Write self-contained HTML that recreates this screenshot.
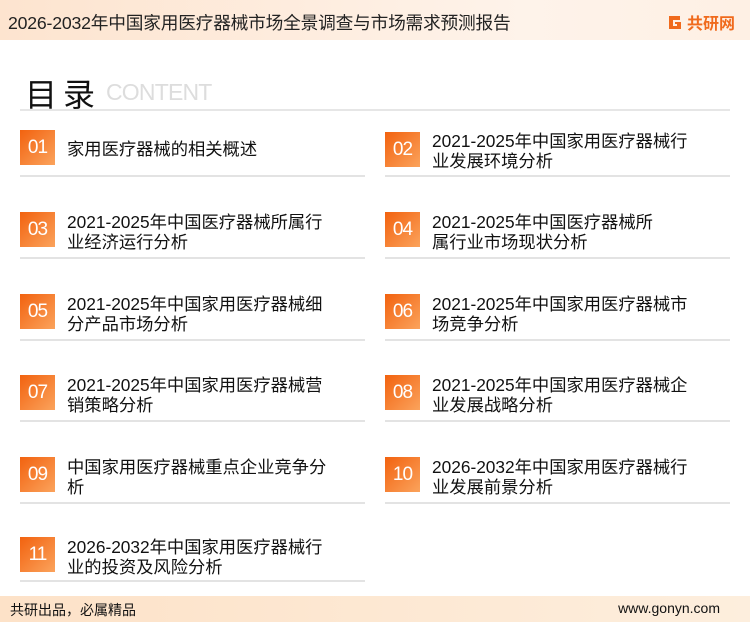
<!DOCTYPE html>
<html><head><meta charset="utf-8"><style>
*{margin:0;padding:0;box-sizing:border-box}
body{width:750px;height:622px;overflow:hidden;background:#fff;font-family:"Liberation Sans","Noto Sans CJK SC",sans-serif;color:#111;position:relative}
.hdr{position:absolute;left:0;top:0;width:750px;height:40px;background:linear-gradient(90deg,#fde4cf,#fef3ea 70%,#fef0e4)}
.hdr .t{position:absolute;left:8px;top:9px;font-size:17.7px;color:#222;letter-spacing:-0.2px}
.logo{position:absolute;left:666px;top:10px;display:flex;align-items:center}
.logo span{color:#f06a1c;font-weight:bold;font-size:16px;margin-left:4px}
.ttl{position:absolute;left:25px;top:70px;font-size:32px;letter-spacing:6px;color:#111}
.cnt{position:absolute;left:106px;top:79px;font-size:23px;color:#ddd;letter-spacing:-0.8px}
.hl{position:absolute;left:20px;top:109px;width:710px;height:2px;background:#e6e6e6}
.it{position:absolute;width:345px}
.box{position:absolute;left:0;width:35px;height:35px;background:linear-gradient(135deg,#f2620f,#fba35c);color:#fff;font-size:19px;text-align:center;line-height:35px;letter-spacing:-1px}
.tx{position:absolute;left:47px;font-size:17.3px;line-height:20px;color:#111;width:320px;white-space:nowrap}
.ln{position:absolute;left:0;width:345px;height:2px;background:#e3e3e3}
.ftr{position:absolute;left:0;top:596px;width:750px;height:26px;background:linear-gradient(90deg,#fde2c8,#fdeedd)}
.ftr .a{position:absolute;left:10px;top:4px;font-size:14px}
.ftr .b{position:absolute;right:30px;top:4px;font-size:14px}
</style></head><body>
<div class="hdr"><div class="t">2026-2032年中国家用医疗器械市场全景调查与市场需求预测报告</div>
<div class="logo"><svg width="17" height="17" viewBox="0 0 17 17"><path d="M3 2h11v4H7v6h4V10h-2V8h6v7H3z" fill="#f06a1c"/></svg><span>共研网</span></div></div>
<div class="ttl">目录</div><div class="cnt">CONTENT</div><div class="hl"></div>

<div class="it" style="left:20px;top:130px"><div class="box" style="top:0">01</div><div class="tx" style="top:9px">家用医疗器械的相关概述</div><div class="ln" style="top:45px"></div></div>
<div class="it" style="left:385px;top:130px"><div class="box" style="top:2px">02</div><div class="tx" style="top:1px">2021-2025年中国家用医疗器械行<br>业发展环境分析</div><div class="ln" style="top:45px"></div></div>

<div class="it" style="left:20px;top:212px"><div class="box">03</div><div class="tx" style="top:0">2021-2025年中国医疗器械所属行<br>业经济运行分析</div><div class="ln" style="top:45px"></div></div>
<div class="it" style="left:385px;top:212px"><div class="box">04</div><div class="tx" style="top:0">2021-2025年中国医疗器械所<br>属行业市场现状分析</div><div class="ln" style="top:45px"></div></div>

<div class="it" style="left:20px;top:294px"><div class="box">05</div><div class="tx" style="top:0">2021-2025年中国家用医疗器械细<br>分产品市场分析</div><div class="ln" style="top:45px"></div></div>
<div class="it" style="left:385px;top:294px"><div class="box">06</div><div class="tx" style="top:0">2021-2025年中国家用医疗器械市<br>场竞争分析</div><div class="ln" style="top:45px"></div></div>

<div class="it" style="left:20px;top:375px"><div class="box">07</div><div class="tx" style="top:0">2021-2025年中国家用医疗器械营<br>销策略分析</div><div class="ln" style="top:45px"></div></div>
<div class="it" style="left:385px;top:375px"><div class="box">08</div><div class="tx" style="top:0">2021-2025年中国家用医疗器械企<br>业发展战略分析</div><div class="ln" style="top:45px"></div></div>

<div class="it" style="left:20px;top:457px"><div class="box">09</div><div class="tx" style="top:0">中国家用医疗器械重点企业竞争分<br>析</div><div class="ln" style="top:45px"></div></div>
<div class="it" style="left:385px;top:457px"><div class="box">10</div><div class="tx" style="top:0">2026-2032年中国家用医疗器械行<br>业发展前景分析</div><div class="ln" style="top:45px"></div></div>

<div class="it" style="left:20px;top:537px"><div class="box">11</div><div class="tx" style="top:0">2026-2032年中国家用医疗器械行<br>业的投资及风险分析</div><div class="ln" style="top:43px"></div></div>

<div class="ftr"><div class="a">共研出品，必属精品</div><div class="b">www.gonyn.com</div></div>
</body></html>
